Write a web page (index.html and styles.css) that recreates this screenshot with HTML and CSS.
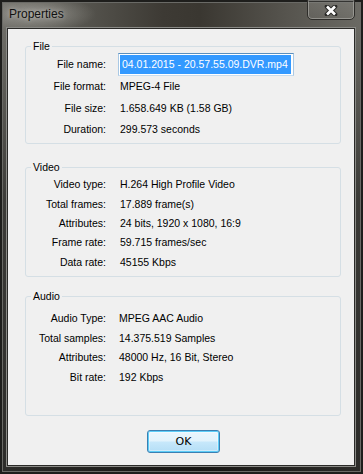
FILE: index.html
```html
<!DOCTYPE html>
<html lang="en">
<head>
<meta charset="utf-8">
<title>Properties</title>
<link rel="stylesheet" href="styles.css">
</head>
<body>
<div class="window">
  <div class="titlebar">
    <span class="title">Properties</span>
    <button class="close" aria-label="Close">
      <svg width="14" height="11" viewBox="0 0 14 11">
        <path d="M3 1.5 L11 9.5 M11 1.5 L3 9.5" stroke="#2a2a28" stroke-width="4.6" stroke-linecap="round" fill="none"/>
        <path d="M3 1.5 L11 9.5 M11 1.5 L3 9.5" stroke="#ffffff" stroke-width="2.6" stroke-linecap="butt" fill="none"/>
      </svg>
    </button>
  </div>
  <div class="client">
    <fieldset class="group group-file">
      <legend>File</legend>
      <div class="rows rows-file">
        <span class="label">File name:</span>
        <span class="value"><span class="edit"><span class="sel">04.01.2015 - 20.57.55.09.DVR.mp4</span></span></span>
        <span class="label">File format:</span><span class="value">MPEG-4 File</span>
        <span class="label">File size:</span><span class="value">1.658.649 KB (1.58 GB)</span>
        <span class="label">Duration:</span><span class="value">299.573 seconds</span>
      </div>
    </fieldset>
    <fieldset class="group group-video">
      <legend>Video</legend>
      <div class="rows rows-video">
        <span class="label">Video type:</span><span class="value">H.264 High Profile Video</span>
        <span class="label">Total frames:</span><span class="value">17.889 frame(s)</span>
        <span class="label">Attributes:</span><span class="value">24 bits, 1920 x 1080, 16:9</span>
        <span class="label">Frame rate:</span><span class="value">59.715 frames/sec</span>
        <span class="label">Data rate:</span><span class="value">45155 Kbps</span>
      </div>
    </fieldset>
    <fieldset class="group group-audio">
      <legend>Audio</legend>
      <div class="rows rows-audio">
        <span class="label">Audio Type:</span><span class="value">MPEG AAC Audio</span>
        <span class="label">Total samples:</span><span class="value">14.375.519 Samples</span>
        <span class="label">Attributes:</span><span class="value">48000 Hz, 16 Bit, Stereo</span>
        <span class="label">Bit rate:</span><span class="value">192 Kbps</span>
      </div>
    </fieldset>
    <div class="buttons">
      <button class="ok">OK</button>
    </div>
  </div>
</div>
</body>
</html>
```

FILE: styles.css
```css
html, body {
  margin: 0;
  padding: 0;
}

body {
  width: 363px;
  height: 474px;
  overflow: hidden;
  background: #1c1c1a;
  font-family: "Liberation Sans", Arial, sans-serif;
}

.window {
  box-sizing: border-box;
  width: 363px;
  height: 474px;
  display: flex;
  flex-direction: column;
  padding: 0 8px 8px 7px;
  background:
    radial-gradient(ellipse 60px 18px at 36px 14px, rgba(190, 188, 182, 0.55), rgba(190, 188, 182, 0) 100%),
    linear-gradient(180deg, rgba(0, 0, 0, 0) 0, rgba(0, 0, 0, 0) 28px, rgba(0, 0, 0, 0.45) 200px, rgba(0, 0, 0, 0.6) 100%),
    linear-gradient(90deg, #6f6e68 0%, #5b5a54 18%, #3d3a34 45%, #3a3731 55%, #55534d 78%, #6b6a64 100%);
  box-shadow: inset 0 0 0 2px #1e1e1c, inset 0 0 0 3px #6a6a66;
}

.titlebar {
  height: 28px;
  display: flex;
  align-items: flex-start;
}

.title {
  padding: 1px 0 0 2px;
  line-height: 27px;
  font-size: 12px;
  color: #111;
  text-shadow: 0 0 5px rgba(225, 223, 218, 0.75);
}

.close {
  margin: -1px 0 0 auto;
  width: 48px;
  height: 21px;
  padding: 2px 0 0;
  display: flex;
  justify-content: center;
  align-items: center;
  border: 1px solid #2e2d2a;
  border-radius: 0 0 5px 5px;
  background: linear-gradient(180deg, rgba(255,255,255,0.10), rgba(255,255,255,0.04));
  box-shadow: inset 0 0 0 1px rgba(200, 200, 195, 0.45);
}

.close svg {
  display: block;
}

.client {
  flex: 1;
  box-sizing: border-box;
  display: flex;
  flex-direction: column;
  padding: 11px 13px 0 17px;
  background: #f0f0f0;
  border: 1px solid #2a2a28;
  box-shadow: 0 0 0 1px #8a8a86;
}

.group {
  margin: 0;
  padding: 0 0 0 5px;
  border: 1px solid #d5dfe5;
  border-radius: 3px;
  min-width: 0;
}

.group legend {
  padding: 0 2px;
  line-height: 13px;
  font-size: 10.5px;
  color: #000;
}

.group-file {
  padding-bottom: 4px;
}

.group-video {
  margin-top: 17px;
  padding-top: 1px;
  padding-bottom: 4px;
}

.group-audio {
  margin-top: 13px;
  padding-top: 6px;
  padding-bottom: 28px;
}

.rows {
  display: grid;
  grid-template-columns: 75px 1fr;
  column-gap: 14px;
  align-items: center;
  font-size: 10.5px;
  line-height: 13px;
  color: #000;
}

.rows-file {
  grid-template-rows: 23px 21px 23px 19px;
}

.rows-video {
  grid-auto-rows: 19.4px;
}

.rows-audio {
  grid-auto-rows: 19.5px;
  column-gap: 13px;
}

.label {
  text-align: right;
  white-space: nowrap;
}

.value {
  white-space: nowrap;
}

.edit {
  box-sizing: border-box;
  display: flex;
  width: 176px;
  height: 23px;
  margin-left: -2px;
  padding: 1px 2px 1px 1px;
  background: #fff;
  border: 1px solid;
  border-color: #5b8fbd #a9c8e4 #c7dcef #a9c8e4;
}

.sel {
  flex: 1;
  display: flex;
  align-items: center;
  padding-left: 2px;
  background: #3399ff;
  color: #fff;
  overflow: hidden;
}

.buttons {
  display: flex;
  justify-content: center;
  padding-top: 14px;
}

.ok {
  box-sizing: border-box;
  width: 73px;
  height: 23px;
  margin-left: 1px;
  padding: 0;
  font-family: "DejaVu Sans", "Liberation Sans", sans-serif;
  font-size: 11px;
  color: #000;
  border: 1px solid #3c7fb1;
  border-radius: 3px;
  background: linear-gradient(180deg, #eaf6fd 0%, #e2f3fc 48%, #c7e8fb 52%, #b4def6 100%);
  box-shadow: inset 0 0 0 1px #5ccdf8, inset 0 0 0 2px rgba(255,255,255,0.35);
}
```
